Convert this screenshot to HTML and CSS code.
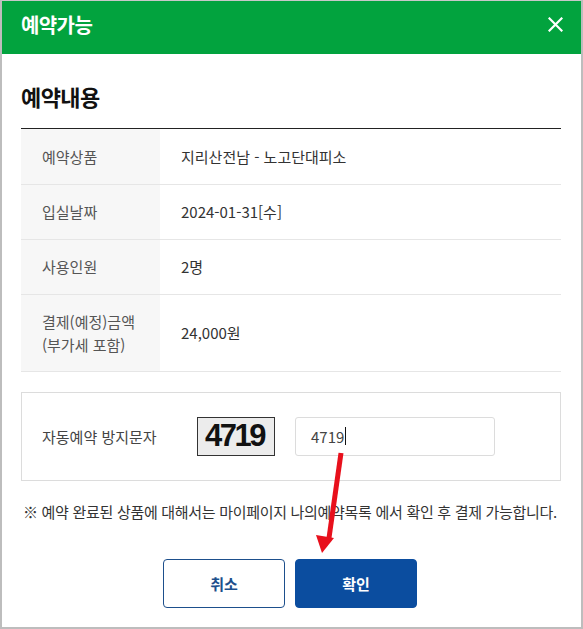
FILE: index.html
```html
<!DOCTYPE html>
<html lang="ko">
<head>
<meta charset="utf-8">
<title>예약가능</title>
<link rel="stylesheet" href="styles.css">
</head>
<body>
<div class="modal">
  <header class="modal-head">
    <h1 class="modal-title">예약가능</h1>
    <svg class="close" width="15" height="15" viewBox="0 0 15 15" aria-label="닫기">
      <path d="M1.5 1.5 L13.5 13.5 M13.5 1.5 L1.5 13.5" stroke="#fff" stroke-width="2.2" stroke-linecap="square"/>
    </svg>
  </header>
  <main class="modal-body">
    <h2 class="section-title">예약내용</h2>
    <table class="info">
      <tr><th>예약상품</th><td>지리산전남 - 노고단대피소</td></tr>
      <tr><th>입실날짜</th><td>2024-01-31[수]</td></tr>
      <tr><th>사용인원</th><td>2명</td></tr>
      <tr class="tall"><th>결제(예정)금액<br>(부가세 포함)</th><td>24,000원</td></tr>
    </table>
    <div class="captcha-box">
      <span class="captcha-label">자동예약 방지문자</span>
      <span class="captcha-img">4719</span>
      <div class="captcha-input">4719<span class="caret"></span></div>
    </div>
    <p class="note">※ 예약 완료된 상품에 대해서는 마이페이지 나의예약목록 에서 확인 후 결제 가능합니다.</p>
    <div class="buttons">
      <button class="btn btn-cancel">취소</button>
      <button class="btn btn-ok">확인</button>
    </div>
  </main>
  <svg class="annot" width="583" height="629" viewBox="0 0 583 629">
    <line x1="341" y1="453" x2="329" y2="538" stroke="#e8101c" stroke-width="5"/>
    <polygon points="316,535 334,538 322,553" fill="#e8101c"/>
  </svg>
</div>
</body>
</html>
```

FILE: styles.css
```css
* { box-sizing: border-box; }
html, body { margin: 0; padding: 0; background: #fff; }
body {
  font-family: "Noto Sans CJK KR", "Noto Sans", sans-serif;
  color: #333;
}
.modal {
  position: relative;
  width: 583px;
  height: 629px;
  border: 2px solid #bdbdbd;
  border-top: 1px solid #c8c8c8;
  background: #fff;
  overflow: hidden;
}
.modal-head {
  height: 53px;
  background: #02a33e;
  display: flex;
  align-items: center;
  justify-content: space-between;
  padding: 0 18px 0 19px;
}
.modal-title {
  margin: 0;
  font-size: 20px;
  font-weight: 700;
  color: #fff;
  letter-spacing: -0.6px;
  line-height: 1;
  padding-bottom: 6px;
}
.close { display: block; margin-top: -7px; }
.modal-body {
  padding: 0 20px 0 19px;
}
.section-title {
  margin: 0;
  padding-top: 27px;
  height: 75px;
  font-size: 22px;
  font-weight: 700;
  line-height: 30px;
  color: #111;
  letter-spacing: -0.6px;
  border-bottom: 1px solid #222;
}
.info {
  width: 100%;
  border-collapse: collapse;
  font-size: 15px;
}
.info tr { height: 55px; border-bottom: 1px solid #e6e6e6; }
.info tr.tall { height: 77px; }
.info th {
  width: 139px;
  background: #f7f7f7;
  text-align: left;
  font-weight: 400;
  color: #555;
  padding: 0 0 0 21px;
  line-height: 23px;
}
.info td {
  padding: 0 0 0 21px;
  color: #333;
}
.captcha-box {
  margin-top: 20px;
  height: 89px;
  border: 1px solid #dcdcdc;
  display: flex;
  align-items: center;
  padding-left: 20px;
}
.captcha-label {
  width: 155px;
  font-size: 15px;
  color: #444;
}
.captcha-img {
  width: 78px;
  height: 39px;
  background: #ececec;
  border: 1px solid #333;
  display: flex;
  align-items: center;
  justify-content: center;
  font-family: "Liberation Sans", Arial, sans-serif;
  font-weight: 700;
  font-size: 31px;
  letter-spacing: -2.5px;
  color: #111;
  padding-right: 3px;
}
.captcha-input {
  margin-left: 20px;
  width: 200px;
  height: 39px;
  border: 1px solid #dcdcdc;
  border-radius: 3px;
  display: flex;
  align-items: center;
  padding-left: 15px;
  font-size: 15px;
  color: #444;
}
.caret {
  display: inline-block;
  width: 1px;
  height: 18px;
  background: #111;
  margin-left: 1px;
}
.note {
  margin: 21px 0 0 2px;
  font-size: 15px;
  line-height: 20px;
  color: #333;
  letter-spacing: -0.3px;
  white-space: nowrap;
}
.buttons {
  margin-top: 37px;
  display: flex;
  justify-content: center;
  gap: 10px;
  padding-right: 2px;
}
.btn {
  width: 122px;
  height: 49px;
  border-radius: 4px;
  font-family: "Noto Sans CJK KR", sans-serif;
  font-size: 15px;
  font-weight: 700;
  cursor: pointer;
}
.btn-cancel {
  background: #fff;
  border: 1px solid #1d4f8c;
  color: #1d4f8c;
}
.btn-ok {
  background: #0b4d9f;
  border: 1px solid #0b4d9f;
  color: #fff;
}
.annot {
  position: absolute;
  left: -2px;
  top: -1px;
  pointer-events: none;
}
```
